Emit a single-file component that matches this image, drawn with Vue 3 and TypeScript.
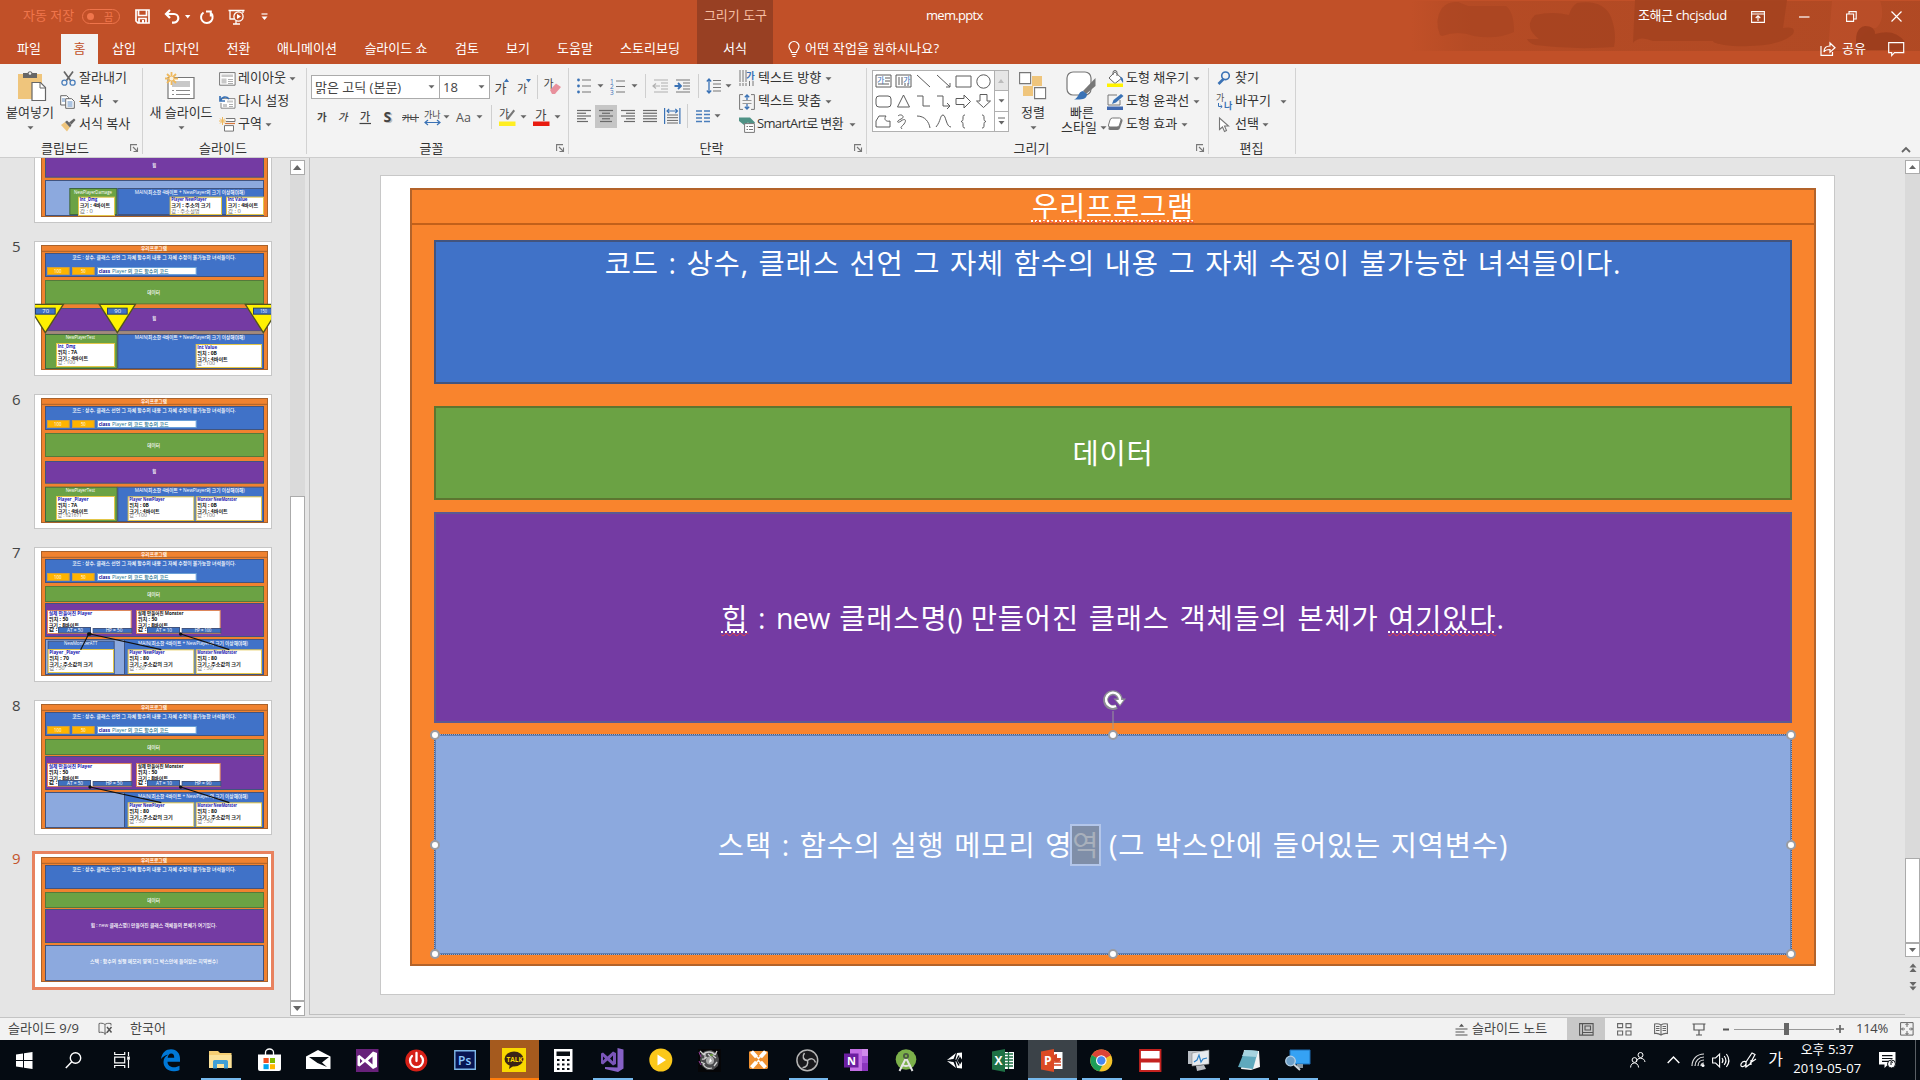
<script setup lang="ts">
import { h } from 'vue'

interface Item { x: number; i?: string; t?: string; c?: string }
interface Glyph { w: number; h: number; d: string }

const S = (w: number, hh: number, d: string): Glyph => ({ w, h: hh, d })
const lines = (ws: number[][], w = 15, color = '#6a6a6a') =>
  S(w, 14, ws.map(([a, b], n) => `<path d="M${a} ${1.5 + n * 2.75}H${b}" stroke="${color}" stroke-width="1.2"/>`).join(''))
const ga = (size: number, x: number, y: number, extra = '', t = '가') =>
  `<text x="${x}" y="${y}" font-size="${size}" fill="#444" ${extra}>${t}</text>`

const icons: Record<string, Glyph> = {
  car: S(7, 4, '<path d="M0.5 0.2h6L3.5 3.6z" fill="#666"/>'),
  carw: S(6, 4, '<path d="M0 0h5.4L2.7 3.4z" fill="#fff"/>'),
  sep: S(1, 24, '<path d="M0.5 0V24" stroke="#cfcfcf"/>'),
  save: S(15, 15, '<path d="M1 1h13v13H3L1 12z M3.5 1v5.5h8V1 M4 14v-4.500h7V14" fill="none" stroke="#fff" stroke-width="1.700"/><path d="M7 11h2v3H7z" fill="#fff"/>'),
  undo: S(17, 15, '<path d="M6 1L2 5l4 4M2.500 5H10a4.300 4.300 0 0 1 0 8.600H8" fill="none" stroke="#fff" stroke-width="2.200"/>'),
  redo: S(15, 16, '<path d="M4.500 3.500A5.800 5.800 0 1 0 11 3.400M11.800 7.500V2.500H7" fill="none" stroke="#fff" stroke-width="2"/>'),
  show: S(17, 16, '<path d="M0.500 1.500h16M2 2v8h4M8 12v3M5 15h7M15 2v2" fill="none" stroke="#fff" stroke-width="1.300"/><circle cx="10.500" cy="7.500" r="4.600" fill="none" stroke="#fff" stroke-width="1.300"/><path d="M9 5v5l4-2.500z" fill="#fff"/>'),
  custom: S(7, 8, '<path d="M0.500 1h6" stroke="#fff" stroke-width="1.200"/><path d="M0.500 3.500h6l-3 3.500z" fill="#fff"/>'),
  ribbonopt: S(14, 12, '<path d="M0.600 0.600h12.800v10.800H0.600zM0.600 3h12.800M7 10V5M4.700 7L7 4.800 9.300 7" fill="none" stroke="#fff" stroke-width="1.100"/>'),
  min: S(11, 2, '<path d="M0 1h10.500" stroke="#fff" stroke-width="1.200"/>'),
  restore: S(11, 11, '<path d="M0.600 3h7v7.400h-7zM3 3V0.600h7.200V8H7.600" fill="none" stroke="#fff" stroke-width="1.100"/>'),
  close: S(11, 11, '<path d="M0.500 0.500l10 10M10.500 0.500l-10 10" stroke="#fff" stroke-width="1.200"/>'),
  share: S(16, 14, '<path d="M1 4v9.300h11.500V10M4 10c0-4 2-6 6-6V1l5 4.700-5 4.500V7.500C7 7.500 5 8 4 10z" fill="none" stroke="#fff" stroke-width="1.200"/>'),
  comment: S(17, 15, '<path d="M0.700 0.700h15v10H6.500L3.700 13.600V10.700h-3z" fill="none" stroke="#fff" stroke-width="1.200"/>'),
  bulb: S(12, 17, '<path d="M3.500 11.500C3.500 9 1 8.500 1 5.500a5 5 0 0 1 10 0c0 3-2.500 3.500-2.500 6zM3.700 13.500h4.600M4.500 15.500h3" fill="none" stroke="#fff" stroke-width="1.200"/>'),
  paste: S(30, 32, '<path d="M1 4h24v25H1z" fill="#efc57c"/><path d="M6 3h4.500a2.700 2.700 0 0 1 5 0H20v5H6z" fill="#666"/><circle cx="13" cy="3.500" r="1.300" fill="#f3f3f3"/><path d="M15 12.500h8.500l5 5V30.500H15z" fill="#fff" stroke="#666" stroke-width="1.200"/><path d="M23 12.500v5.500h5.500" fill="none" stroke="#666"/>'),
  cut: S(15, 15, '<path d="M3 0.500l6.500 9M12 0.500l-6.500 9" stroke="#666" stroke-width="1.700"/><circle cx="3.400" cy="11.700" r="2.500" fill="none" stroke="#4a7ebb" stroke-width="1.300"/><circle cx="11.600" cy="11.700" r="2.500" fill="none" stroke="#4a7ebb" stroke-width="1.300"/>'),
  copy: S(15, 14, '<path d="M0.700 0.700h6l2 2V10H0.700z" fill="#fff" stroke="#666"/><path d="M5.700 3.700h6l2.600 2.600v7H5.700z" fill="#fff" stroke="#666"/><path d="M2 4h3M2 6h3M7.500 7h5M7.500 9h5M7.500 11h5" stroke="#4a7ebb" stroke-width="0.900"/>'),
  brush: S(16, 14, '<path d="M1 7l4-3 5 5-3 4.500z" fill="#efc57c"/><path d="M5 4l2-1.500L11.500 7 10 9.500z" fill="#666"/><path d="M9 4.500L14 0.500l1.500 1.500-4 4.500z" fill="#666"/>'),
  newslide: S(32, 28, '<path d="M3 5.500h26v21H3z" fill="#fff" stroke="#777" stroke-width="1.200"/><path d="M7 9h18v6H7z" fill="#c8c8c8"/><path d="M7 18.500h2m2 0h14M7 22.500h2m2 0h14" stroke="#888"/><path d="M6.500 0v13M0 6.500h13M2 2l9 9M11 2l-9 9" stroke="#efb95e" stroke-width="1.800"/><circle cx="6.500" cy="6.500" r="2" fill="#f8f0e0"/>'),
  layout: S(17, 14, '<path d="M0.600 0.600h15.500v12.600H0.600z" fill="#fff" stroke="#777"/><path d="M2.500 2.500h11.500v2.500H2.500zM2.500 6.500h5v5h-5z" fill="#c8c8c8"/><path d="M9 7.500h5M9 9.500h5M9 11.500h5" stroke="#999" stroke-width="0.800"/>'),
  reset: S(17, 14, '<path d="M4 3.600h12v9.600H2V8" fill="#fff" stroke="#888"/><path d="M8 5.500h6v2H8zM4 9h4v3H4z" fill="#c8c8c8"/><path d="M10 9.500h4M10 11.500h4" stroke="#999" stroke-width="0.800"/><path d="M1 1v5h5M1.500 5.500C3 2 7 0.500 10 4" fill="none" stroke="#3a72b5" stroke-width="1.700"/>'),
  section: S(17, 15, '<path d="M7 1.500h9M7 4.500h9v-3M5.500 8.600h9v5.500h-9z" fill="#fff" stroke="#777"/><path d="M6 6.500h10" stroke="#d9783c" stroke-width="1.200"/><path d="M3.500 0v8M0 4h7M1 1.500l5 5M6 1.500l-5 5" stroke="#efb95e" stroke-width="1"/>'),
  grow: S(15, 18, ga(13, -0.5, 15) + '<path d="M9 4l2.500-3.500L14 4z" fill="#3a72b5"/>'),
  shrink: S(15, 18, ga(11, 0, 15) + '<path d="M9 1h5l-2.500 3.500z" fill="#3a72b5"/>'),
  clear: S(18, 18, ga(11, -0.5, 10) + '<path d="M6 12l6-6.500 5 3.500-6 7h-3z" fill="#e8909c"/>'),
  b: S(12, 16, ga(10.5, 0, 12, 'font-weight="700"')),
  it: S(12, 16, `<g transform="translate(2.500 0) skewX(-12)">${ga(10.5, 0, 12, 'font-weight="500"')}</g>`),
  u: S(14, 18, ga(11, 1, 12.5, 'font-weight="500"') + '<path d="M0.500 15.500h11.500" stroke="#444" stroke-width="1.200"/>'),
  sh: S(13, 18, '<text x="2" y="15" font-size="14" font-weight="700" fill="#bbb">S</text><text x="0.500" y="14" font-size="14" font-weight="700" fill="#444">S</text>'),
  strike: S(17, 14, '<text x="0" y="10.500" font-size="8.500" font-weight="500" fill="#444">가나</text><path d="M0 7.500h17" stroke="#444"/>'),
  spacing: S(18, 18, '<text x="0" y="10" font-size="9" fill="#444">가나</text><path d="M1 14.500h15M4 12L1 14.500l3 2.500M13 12l3 2.500-3 2.500" fill="none" stroke="#3a72b5" stroke-width="1.200"/>'),
  aa: S(18, 16, '<text x="0" y="12.500" font-size="12.500" fill="#555">Aa</text>'),
  hl: S(17, 20, ga(11, 0, 11) + '<path d="M7 12L14.500 2.500l1.500 1.500L9 13z" fill="#777"/><path d="M0 14.500h16.500V19H0z" fill="#ffee22"/>'),
  fc: S(17, 20, ga(12.5, 2, 12.5) + '<path d="M0 14.500h16.500V19H0z" fill="#e81b10"/>'),
  bullets: S(15, 16, '<path d="M5 2h9M5 8h9M5 14h9" stroke="#777" stroke-width="1.100"/><circle cx="1.500" cy="2" r="1.400" fill="#3a72b5"/><circle cx="1.500" cy="8" r="1.400" fill="#3a72b5"/><circle cx="1.500" cy="14" r="1.400" fill="#3a72b5"/>'),
  nums: S(16, 17, '<path d="M6 3h9M6 8.500h9M6 14h9" stroke="#777" stroke-width="1.100"/><text x="0" y="5.500" font-size="6.500" fill="#3a72b5">1</text><text x="0" y="11" font-size="6.500" fill="#3a72b5">2</text><text x="0" y="16.500" font-size="6.500" fill="#3a72b5">3</text>'),
  outdent: S(17, 14, '<path d="M2 1h14M9 4h7M9 7h7M9 10h7M2 13h14M1 7h7M4 4.500L1 7l3 2.500" fill="none" stroke="#b0b0b0" stroke-width="1.200"/>'),
  indent: S(17, 14, '<path d="M2 1h14M9 4h7M9 7h7M9 10h7M2 13h14" stroke="#777" stroke-width="1.100"/><path d="M0.500 7H7M4 4l3 3-3 3" fill="none" stroke="#3a72b5" stroke-width="1.800"/>'),
  spacingv: S(16, 16, '<path d="M7 2.500h8M7 6h8M7 9.500h8M7 13h8" stroke="#777" stroke-width="1.100"/><path d="M3 1v14M0.800 3.500L3 1l2.200 2.500M0.800 12.500L3 15l2.200-2.500" fill="none" stroke="#3a72b5" stroke-width="1.300"/>'),
  al: lines([[0, 14], [0, 9], [0, 14], [0, 9], [0, 11]]),
  ac: lines([[0, 14], [3, 11], [0, 14], [3, 11], [1, 13]]),
  ar: lines([[0, 14], [5, 14], [0, 14], [5, 14], [3, 14]]),
  aj: lines([[0, 14], [0, 14], [0, 14], [0, 14], [0, 14]]),
  ad: S(17, 17, '<path d="M0.600 0v16M15.900 0v16M3 3h10.500M5.200 0.800L3 3l2.200 2.200M11.300 0.800L13.500 3l-2.200 2.200" fill="none" stroke="#3a72b5" stroke-width="1.200"/><path d="M3 7h11M3 9.700h11M3 12.400h11M3 15h11" stroke="#666"/>'),
  cols: S(14, 13, '<path d="M0 1h6M8 1h6M0 4.500h6M8 4.500h6M0 8h6M8 8h6M0 11.500h6M8 11.500h6" stroke="#4a7ebb" stroke-width="1.300"/>'),
  tdir: S(17, 17, '<path d="M1 0v12M4 0v12M7 0v12M1 13v3M4 13v3M7 13v3M10.500 11v5M14 11v5" stroke="#777"/><text x="7" y="9" font-size="9.500" fill="#3a72b5" font-weight="700">가</text>'),
  talign: S(17, 16, '<path d="M4 0.600H0.600v14.800H4M12 0.600h3.400v14.800H12" fill="none" stroke="#777"/><path d="M3.500 6.500h9M3.500 9.500h9" stroke="#999"/><path d="M8 1v5M5.800 3.200L8 1l2.200 2.200M8 15v-5M5.800 12.800L8 15l2.200-2.200" fill="none" stroke="#3a72b5" stroke-width="1.300"/>'),
  smart: S(17, 16, '<path d="M0 0.500h11l5 5-3 3L9 5.500 5 8 0 4z" fill="#4f9285"/><path d="M5.600 6.600h9.800v8.800H5.600z" fill="#fff" stroke="#777"/><path d="M7.500 9.500h1.500M10 9.500h4M7.500 12.500h1.500M10 12.500h4" stroke="#777"/>'),
  arrange: S(28, 28, '<path d="M13 4h10v10H13zM4 14h10v10H4z" fill="#efc57c"/><path d="M0.600 0.600h11v11H0.600zM15.600 15.600h11v11H15.600z" fill="#fff" stroke="#777" stroke-width="1.100"/>'),
  quick: S(31, 30, '<path d="M7 1h12a6 6 0 0 1 6 6v11a6 6 0 0 1-6 6H7a6 6 0 0 1-6-6V7a6 6 0 0 1 6-6z" fill="#fff" stroke="#777" stroke-width="1.200"/><path d="M29.500 7v8L20 23l-3-3z" fill="#777"/><path d="M17 20l4 3c0 5-5 6-13 5.500 5-1.500 4-8 9-8.500z" fill="#3a72b5"/>'),
  fill: S(17, 16, '<path d="M8 0.800l6.500 6.500L8 12.500 2 7z" fill="#fff" stroke="#666"/><path d="M6 4V1.500a2 2 0 0 1 4 0V5" fill="none" stroke="#666"/><path d="M13 5.500c3 1 3.500 3 3 6.500l-2-3z" fill="#3a72b5"/><path d="M0 12.500h16V16H0z" fill="#fff200"/>'),
  outline: S(17, 16, '<path d="M10 1H1v10h12V6" fill="none" stroke="#777"/><path d="M5 10l1.500-4L14 0l2.500 2L9 8.500z" fill="#3a72b5"/><path d="M0 12.500h16V16H0z" fill="#4169b0"/>'),
  effect: S(17, 15, '<path d="M5 2h9q2 0 1.500 2L13 11q-.5 2-2.500 2H3Q1 13 1.500 11z" fill="#777"/><path d="M5.500 1h7q2 0 1.500 2L12.500 8q-.5 2-2.500 2H3Q1 10 1.500 8L3 3q.5-2 2.500-2z" fill="#fff" stroke="#777"/>'),
  find: S(14, 15, '<circle cx="8.500" cy="4.800" r="3.800" fill="none" stroke="#3a72b5" stroke-width="1.600"/><path d="M6.500 8L1.500 13" stroke="#3a72b5" stroke-width="2.600"/>'),
  replace: S(18, 17, '<text x="0" y="8" font-size="9" fill="#555">가</text><text x="8" y="15.500" font-size="9" font-weight="700" fill="#3a72b5">나</text><path d="M2.500 10v3.500H6M4.500 12l1.700 1.600-1.700 1.600" fill="none" stroke="#3a72b5"/>'),
  select: S(11, 16, '<path d="M1.500 1v11.500l3-2.500 2 4.500 2-1L6.500 9h4z" fill="#fff" stroke="#777" stroke-width="1.100"/>'),
  launch: S(9, 8, '<path d="M0.600 7V0.600H7M3 3l4 4M7.500 3.500v4h-4" fill="none" stroke="#777" stroke-width="1.100"/>'),
  spell: S(15, 14, '<path d="M7 2.500C5 1 3 1 1 1.500v9c2-.5 4-.5 6 1 1-.7 1.500-1 2.500-1M7 2.500V13M7 2.500C8 1.500 10 1 13 1.500v2" fill="none" stroke="#666"/><path d="M9 5l4.500 5.500M13.500 5L9 10.500" stroke="#555" stroke-width="1.500"/>'),
  notes: S(13, 13, '<path d="M0.500 6h12M0.500 9h9M0.500 12h12" stroke="#555" stroke-width="1.100"/><path d="M4 3.800h5L6.500 0.800z" fill="#555"/>'),
  vnormal: S(15, 13, '<path d="M0.600 0.600h13.500v11.500H0.600zM3.500 0.600v11.500M6 3h5.500v4H6zM3.500 9.500h10" fill="none" stroke="#555" stroke-width="1.100"/>'),
  vsort: S(15, 13, '<path d="M0.600 0.600h5v4h-5zM9 0.600h5v4H9zM0.600 8h5v4h-5zM9 8h5v4H9z" fill="none" stroke="#666" stroke-width="1.100"/>'),
  vread: S(14, 13, '<path d="M7 2C5 .6 3 .6 .6 1v9.500C3 10 5 10.500 7 12c2-1.500 4-2 6.400-1.500V1C11 .6 9 .6 7 2zV12" fill="none" stroke="#666" stroke-width="1.100"/><path d="M2 3.500h3.500M2 5.500h3.500M2 7.500h3.500M8.500 3.500H12M8.500 5.500H12M8.500 7.500H12" stroke="#666"/>'),
  vshow: S(14, 13, '<path d="M0.500 1h13M2 1v6h10V1M7 7v5M4 12h6" fill="none" stroke="#555" stroke-width="1.200"/>'),
  minus: S(7, 3, '<path d="M0 1.500h6" stroke="#555" stroke-width="2"/>'),
  plus: S(8, 8, '<path d="M0 4h8M4 0v8" stroke="#666" stroke-width="1.700"/>'),
  slider: S(101, 12, '<path d="M0 6.500h100" stroke="#999"/><path d="M50 0h5v12h-5z" fill="#666"/>'),
  fit: S(14, 14, '<path d="M0.600 0.600h12.500v12.500H0.600z" fill="none" stroke="#666"/><path d="M7 1.500v3.500M7 9v3.500M1.500 7H5M9 7h3.500M5.500 3L7 1.500 8.500 3M5.500 11L7 12.500 8.500 11M3 5.500L1.500 7 3 8.500M11 5.500L12.500 7 11 8.500" stroke="#666" fill="none"/>'),
  win: S(17, 17, '<path d="M0 2.500l7-1v6.500H0zM8 1.300L16.500 0v8H8zM0 9h7v6.500l-7-1zM8 9h8.500v8L8 15.700z" fill="#fff"/>'),
  search: S(17, 17, '<circle cx="10.500" cy="6" r="5.200" fill="none" stroke="#fff" stroke-width="1.400"/><path d="M6.800 9.800L0.800 16" stroke="#fff" stroke-width="1.500"/>'),
  task: S(17, 16, '<path d="M0.700 0v2.500h10V0M0.700 5.200h10v5.600h-10zM0.700 16v-2.500h10V16M14.500 0v4M14.500 8v8" fill="none" stroke="#fff" stroke-width="1.200"/><path d="M13.200 4.500h2.600v3.300h-2.600z" fill="#fff"/>'),
  edge: S(20, 22, '<path d="M0 10C1 3.500 5 .3 10 .3c6 0 9 4.500 9 9.700v2.700H6.500c0 4 3.500 5.500 6.500 5.500 2 0 4-.6 5.500-1.500v4.200c-2 1-4 1.300-6.200 1.300C7 22.200 2.500 18.500 2.500 13c0-3.500 2-6 4.500-7.200C5 6 2 7.300 0 10zM6.700 8.800h6.500c0-3-1-4.300-3-4.300-2 0-3.200 1.700-3.500 4.300z" fill="#0078d7"/>'),
  folder: S(23, 20, '<path d="M0 1h9l2 2h11.500v15H0z" fill="#f5ce73"/><path d="M0 5h22.500v13H0z" fill="#fbe29a"/><path d="M4 18.500v-7a1.500 1.500 0 0 1 1.500-1.500h12A1.500 1.500 0 0 1 19 11.500v7h-4V14H8v4.500z" fill="#3f9fd6"/>'),
  store: S(23, 23, '<path d="M7.500 6V3.500a4 3.500 0 0 1 8 0V6" fill="none" stroke="#fff" stroke-width="1.300"/><path d="M0 5.500h23V20a2 2 0 0 1-2 2H2a2 2 0 0 1-2-2z" fill="#fff"/><path d="M5.500 9h5.200v5H5.500z" fill="#f25022"/><path d="M12 9h5v5h-5z" fill="#7fba00"/><path d="M5.500 15.200h5.200v5H5.500z" fill="#00a4ef"/><path d="M12 15.200h5v5h-5z" fill="#ffb900"/>'),
  mail: S(25, 20, '<path d="M0 6.500L12 0l12.500 6.500V19H0z" fill="#fff"/><path d="M3 7h20l-7 5.500 5 4.500-9.500-4z" fill="#080e14"/>'),
  vs: S(23, 23, '<path d="M0 0h22.500v23H0z" fill="#68217a"/><path d="M17 2.500l4 1.500v14l-4 2L9 13l-5.500 4.500L1.500 16.500V7L3.500 6 9 10.500zM16.500 7.500L12 11.500l4.500 4zM4 9.500v5l2.500-2.500z" fill="#fff" fill-rule="evenodd"/>'),
  power: S(23, 23, '<circle cx="11.300" cy="11.500" r="11" fill="#d62017"/><path d="M7 7a6.500 6.500 0 1 0 9 0M11.500 4v8" fill="none" stroke="#fff" stroke-width="2.300" stroke-linecap="round"/>'),
  ps: S(23, 20, '<path d="M0.800 0.800h20.500v18.500H0.800z" fill="#071552" stroke="#7fb8e8" stroke-width="1.400"/><text x="4" y="14.500" font-size="12" font-weight="600" fill="#8ecbff">Ps</text>'),
  kakao: S(25, 24, '<path d="M0 0h24v24H0z" fill="#f9d800"/><ellipse cx="12" cy="11" rx="9.500" ry="7.500" fill="#3a2317"/><path d="M8 16l-1 5 5-3.500z" fill="#3a2317"/><text x="4.500" y="13.500" font-size="6.500" font-weight="700" fill="#f9d800">TALK</text>'),
  calc: S(19, 23, '<path d="M0 0h18.500v23H0z" fill="#fff"/><path d="M2.500 2.500h13.500v4.500H2.500zM3 10h2.500v2H3zM8 10h2.500v2H8zM13 10h2.500v2H13zM3 14.500h2.500v2H3zM8 14.500h2.500v2H8zM13 14.500h2.500v2H13zM3 19h2.500v2H3zM8 19h2.500v2H8zM13 19h2.500v2H13z" fill="#0a0f14"/>'),
  vs2: S(25, 24, '<path d="M17.500 0l6 1.500v19L18 24 5 21v-2l12.500.500z" fill="#8661c5"/><path d="M1 5.500l2-1 4.500 4 5.500-5 3 1.500v11l-3 1.500-5.500-5-4.500 4-2-1zM13 7.500L10 10.500l3 3zM3 8.500v4l2-2z" fill="#7a55b8" fill-rule="evenodd"/>'),
  play: S(24, 24, '<circle cx="11.800" cy="12" r="11.500" fill="#fbc81a"/><path d="M8.500 6.500v11l8.500-5.500z" fill="#fff"/>'),
  eye: S(24, 23, '<path d="M0 0h23v23H0z" fill="#060608"/><path d="M3 5l4-3 6-1 6 3 2 6-1 7-5 4-6 0-5-4-2-6z" fill="#4a4a4c"/><path d="M2 2l4 4M19 2l-2 4M5 6c3-4 9-4 12 0M4 10c2 1 3-1 5-2M14 6l4 3M5 15c2 4 6 5 9 4M10 5l4 4M16 17l3-4M7 4v5M3 13l4 2" fill="none" stroke="#d0d0d0" stroke-width="1.300"/><circle cx="12" cy="11.500" r="4" fill="#a8a8a8"/><path d="M12 9l2 3-3 2z" fill="#fff"/><path d="M1 3l2 5M1 12l2 4" stroke="#9a3ea0"/><path d="M12 6h3" stroke="#6ca63a" stroke-width="1.500"/>'),
  xsplit: S(22, 22, '<path d="M2 2h17l1 1v16l-1 1H2l-1-1V3z" fill="#ee9030"/><path d="M3.500 2.500l5 5.500M17.500 2.500l-5 5.500M3.500 18.500l5-5.500M17.500 18.500l-5-5.500" stroke="#fff" stroke-width="4"/><path d="M7 6l3.500 3.500L14 6M7 15l3.500-3.500L14 15" fill="none" stroke="#fff" stroke-width="1.500"/>'),
  obs: S(23, 23, '<circle cx="11.300" cy="11.300" r="10.400" fill="#19191c" stroke="#b4b4b4" stroke-width="1.500"/><path d="M11.500 11.500c-4.500-.5-5.500-4-3-7.500M11.500 11.500c3-3 7-2 8 2M11.500 11.500c1 4-1 7-5 7.200" fill="none" stroke="#b9b9b9" stroke-width="1.500"/>'),
  onenote: S(25, 23, '<path d="M6 0h18v22H6z" fill="#c36fe4"/><path d="M18 0h6v7h-6z" fill="#d08bea"/><path d="M18 7h6v7h-6z" fill="#a24fd2"/><path d="M18 14h6v8h-6z" fill="#8b35bd"/><path d="M0 4.500h14.500v14H0z" fill="#6c1fa0"/><text x="3" y="15.500" font-size="11" font-weight="700" fill="#fff">N</text>'),
  android: S(22, 23, '<circle cx="11" cy="10.500" r="10.300" fill="#7cb04a"/><path d="M11 9L4.500 22M11 9l6.500 13M6.500 15.500c3 2 6 2 9 0" fill="none" stroke="#e4e4e4" stroke-width="2"/><circle cx="11" cy="7" r="3" fill="#4b5a42"/><circle cx="11" cy="7" r="1.200" fill="#7cb04a"/>'),
  unity: S(16, 17, '<path d="M0 8L9 1 6.500 7zM0 9L9 16 6.500 10z" fill="#fff"/><path d="M10 1l5 -0.500V7.500L13 4.500 10.500 8.500 13 12.500 15 9.500V16.500L10 16 8.500 9.500V7.500z" fill="#fff"/><path d="M4 8.500h5.500M9.500 8.500L12 3.500M9.500 8.500L12 13.500" stroke="#050b12" stroke-width="1.400"/>'),
  excel: S(23, 23, '<path d="M11 3h11v17H11z" fill="#fff"/><path d="M12 5h9M12 8h9M12 11h9M12 14h9M12 17h9M16.500 3v17" stroke="#1e7145" stroke-width="1.300"/><path d="M0 2.500L13 0v23L0 20.500z" fill="#1e7145"/><text x="2.500" y="16" font-size="12" font-weight="700" fill="#fff">X</text>'),
  ppt: S(23, 23, '<path d="M11 3h10.500v17H11z" fill="#fff"/><path d="M13 13h7M13 16h7" stroke="#d24726" stroke-width="1.300"/><path d="M16 5v4h4a4 4 0 1 1-4-4z" fill="#d24726"/><path d="M0 2.500L13 0v23L0 20.500z" fill="#dc4a24"/><text x="3" y="16" font-size="12" font-weight="700" fill="#fff">P</text>'),
  chrome: S(23, 23, '<circle cx="11.300" cy="11.500" r="11" fill="#f3c32b"/><path d="M11.300 11.500L1.800 6A11 11 0 0 1 20.800 6z" fill="#dc4437"/><path d="M20.800 6H11.300v5.500z" fill="#dc4437"/><path d="M1.800 6l9.500 5.500 1 5-3 5.800A11 11 0 0 1 1.800 6z" fill="#1d9d58"/><circle cx="11.300" cy="11.500" r="5.300" fill="#fff"/><circle cx="11.300" cy="11.500" r="4.200" fill="#4688f1"/>'),
  red: S(23, 23, '<path d="M1 1h20.500v9.500H1zM1 12.500h20.500V22H1z" fill="#fff" stroke="#c5221f" stroke-width="1.800"/>'),
  perf: S(23, 22, '<path d="M0 2h17v13H0z" fill="#b9bec4"/><path d="M4 4l17-3v14L4 17z" fill="#e6eaee" stroke="#888" stroke-width=".6"/><path d="M6 13l3-2 2-5 2 7 2-3 4-1" fill="none" stroke="#2a80c8" stroke-width="1.200"/><path d="M8 17l8-1 2 4-9 2z" fill="#b9bec4"/>'),
  notepad: S(24, 23, '<path d="M7 1l15 1 1 16-9 3-10-1z" fill="#f3f3f3"/><path d="M8 1l13 1-5 18L1 18z" fill="#5fa9bd"/><path d="M8 1l13 1-1.500 6L5 7z" fill="#a6d3df"/>'),
  rdp: S(26, 23, '<path d="M5 1h20v14H5z" fill="#35a2f4" stroke="#1f6fb5"/><path d="M12 15h6v4h-6z" fill="#8494a0"/><circle cx="5.500" cy="12" r="4.800" fill="#6d9fc8" stroke="#b5cfe4" stroke-width="1.300"/><path d="M9 15.500l6 5.500" stroke="#cfd8df" stroke-width="2"/>'),
  people: S(16, 16, '<circle cx="10.500" cy="3" r="2.500" fill="none" stroke="#fff"/><path d="M6.500 10c0-5 8-5 8.500 0" fill="none" stroke="#fff"/><circle cx="4.500" cy="8" r="2.400" fill="none" stroke="#fff"/><path d="M0.600 15.500c0-6 7.500-6 8 0" fill="none" stroke="#fff"/>'),
  up: S(13, 8, '<path d="M0.700 7L6.500 1l5.800 6" fill="none" stroke="#fff" stroke-width="1.400"/>'),
  wifi: S(14, 14, '<path d="M1 13C1 6 6 1 13 1M4 13c0-5 4-9 9-9M7 13c0-3.500 2.500-6 6-6M10 13c0-2 1-3 3-3" fill="none" stroke="#ddd" stroke-width="1.200"/><circle cx="12" cy="12.500" r="1.500" fill="#fff"/>'),
  vol: S(18, 15, '<path d="M0.600 5h3l4-4v13l-4-4h-3z" fill="none" stroke="#fff" stroke-width="1.100"/><path d="M10 5q2 2.500 0 5M12.200 3q3.500 4.500 0 9M14.400 1q5 6.500 0 13" fill="none" stroke="#fff" stroke-width="1.100"/>'),
  pen: S(17, 17, '<path d="M6 10L12 1l3 1.500-5 9.500-4 3zM1 12c2-4 6-3 5 0s-6 4-5 0zM10 11l6-4M11 8v5" fill="none" stroke="#fff" stroke-width="1.200"/>'),
  action: S(18, 17, '<path d="M0 0h16.500v12.500H9L5.500 16v-3.500H0z" fill="#fff"/><path d="M3 3.700h10.500M3 6.500h10.500M3 9.300h7" stroke="#0a0f14" stroke-width="1.200"/><circle cx="12.500" cy="12" r="4" fill="#fff" stroke="#0a0f14"/><path d="M12 13V9.500l2 1" fill="none" stroke="#0a0f14"/>'),
}

const Icon = (p: { n: string }) => {
  const g = icons[p.n]
  return h('svg', { class: 'icon', width: g.w, height: g.h, viewBox: `0 0 ${g.w} ${g.h}`, innerHTML: g.d })
}

// A row whose cells start at the given stops; the last cell takes what is left.
const Strip = (p: { items: Item[]; from: number }) => {
  const xs = p.items.map((i) => i.x)
  const cols = xs.map((x, n) => (n < xs.length - 1 ? `${xs[n + 1] - x}px` : '1fr')).join(' ')
  return h('div', { class: 'strip', style: { paddingLeft: `${xs[0] - p.from}px`, gridTemplateColumns: cols } },
    p.items.map((i) => h('span', { class: ['cell', i.t ? 'txt' : '', i.c] }, i.i ? h(Icon, { n: i.i }) : i.t)))
}

const ic = (x: number, i: string, c?: string): Item => ({ x, i, c })
const tx = (x: number, t: string, c?: string): Item => ({ x, t, c })

const quick = [tx(23, '자동 저장', 'dim'), tx(82, '끔', 'toggle'), ic(135, 'save'), ic(164, 'undo'), ic(185, 'carw'), ic(199, 'redo'), ic(228, 'show'), ic(261, 'custom')]
const windowBar = [tx(926, 'mem.pptx', 'narrow'), tx(1638, '조해근 chcjsdud', 'name'), ic(1751, 'ribbonopt'), ic(1799, 'min'), ic(1846, 'restore'), ic(1891, 'close')]
const tabs = [
  { t: '파일', w: 58 }, { t: '홈', w: 37, on: true }, { t: '삽입', w: 52 }, { t: '디자인', w: 63 }, { t: '전환', w: 51 },
  { t: '애니메이션', w: 86 }, { t: '슬라이드 쇼', w: 92 }, { t: '검토', w: 50 }, { t: '보기', w: 52 }, { t: '도움말', w: 62 }, { t: '스토리보딩', w: 88 },
]
const tell = [ic(788, 'bulb'), tx(805, '어떤 작업을 원하시나요?', 'wide'), ic(1820, 'share'), tx(1842, '공유'), ic(1888, 'comment')]

const clip = [
  [ic(61, 'cut'), tx(79, '잘라내기')],
  [ic(60, 'copy'), tx(79, '복사'), ic(112, 'car')],
  [ic(60, 'brush'), tx(79, '서식 복사')],
]
const slides = [
  [ic(219, 'layout'), tx(238, '레이아웃'), ic(289, 'car')],
  [ic(219, 'reset'), tx(238, '다시 설정')],
  [ic(219, 'section'), tx(238, '구역'), ic(265, 'car')],
]
const font1 = [ic(495, 'grow'), ic(517, 'shrink'), ic(537, 'sep'), ic(544, 'clear')]
const font2 = [ic(317, 'b'), ic(338, 'it'), ic(359, 'u'), ic(383, 'sh'), ic(402, 'strike'), ic(424, 'spacing'), ic(443, 'car'), ic(456, 'aa'), ic(476, 'car'), ic(491, 'sep'), ic(499, 'hl'), ic(520, 'car'), ic(533, 'fc'), ic(554, 'car')]
const para1 = [ic(577, 'bullets'), ic(597, 'car'), ic(610, 'nums'), ic(631, 'car'), ic(645, 'sep'), ic(652, 'outdent'), ic(674, 'indent'), ic(698, 'sep'), ic(706, 'spacingv'), ic(725, 'car')]
const para2 = [ic(577, 'al'), ic(595, 'ac', 'pressed'), ic(621, 'ar'), ic(643, 'aj'), ic(664, 'ad'), ic(687, 'sep'), ic(696, 'cols'), ic(714, 'car')]
const text3 = [
  [ic(739, 'tdir'), tx(758, '텍스트 방향'), ic(825, 'car')],
  [ic(739, 'talign'), tx(758, '텍스트 맞춤'), ic(825, 'car')],
  [ic(739, 'smart'), tx(757, 'SmartArt로 변환', 'tight'), ic(849, 'car')],
]
const shapeStyle = [
  [ic(1107, 'fill'), tx(1126, '도형 채우기'), ic(1193, 'car')],
  [ic(1107, 'outline'), tx(1126, '도형 윤곽선'), ic(1193, 'car')],
  [ic(1107, 'effect'), tx(1126, '도형 효과'), ic(1181, 'car')],
]
const edit = [
  [ic(1217, 'find'), tx(1235, '찾기')],
  [ic(1216, 'replace'), tx(1235, '바꾸기'), ic(1280, 'car')],
  [ic(1218, 'select'), tx(1235, '선택'), ic(1262, 'car')],
]
const gallery = [
  '<path d="M1 2h15v12H1z"/><path d="M10 5h5M10 8h5M3 11h11"/><text x="2" y="9.500" font-size="8" fill="#3a72b5" stroke="none">가</text>',
  '<path d="M1 2h15v12H1z"/><path d="M4 4v8M7 4v8M10 10v3M13 10v3"/><text x="8" y="9.500" font-size="8" fill="#3a72b5" stroke="none">가</text>',
  '<path d="M2 2l13 12"/>', '<path d="M2 2l13 12M15 10v4h-4"/>', '<path d="M1 3h15v11H1z"/>', '<circle cx="8.500" cy="8.500" r="6.700"/>',
  '<rect x="1" y="3" width="15" height="11" rx="3"/>', '<path d="M8.500 2l6 12h-12z"/>', '<path d="M2 3h6v10h7"/>', '<path d="M2 3h6v10h7M12 10l3 3-3 3"/>', '<path d="M1 5.500h8V2l6.500 6.500L9 15v-3.500H1z"/>', '<path d="M5 1.500h7V8h3.500l-7 6.500L1.500 8H5z"/>',
  '<path d="M4 3h7c-3 4 1 6 4 5v6H1V8z"/>', '<path d="M3 3c3-3 8 1 3 3s-4 5 0 2 6-1 3 3-4 2-2 5"/>', '<path d="M2 3c8 0 12 6 13 12"/>', '<path d="M1 14C6 8 5 2 8 2s3 12 8 12"/>', '<path d="M10 2c-2 0-2 1-2 3s0 3-2 3.500c2 .5 2 1.500 2 3.500s0 3 2 3"/>', '<path d="M7 2c2 0 2 1 2 3s0 3 2 3.500c-2 .5-2 1.500-2 3.500s0 3-2 3"/>',
]

const status = [tx(8, '슬라이드 9/9'), ic(98, 'spell'), tx(130, '한국어'), ic(1455, 'notes'), tx(1472, '슬라이드 노트'), ic(1567, 'vnormal', 'view'), ic(1617, 'vsort'), ic(1654, 'vread'), ic(1692, 'vshow'), ic(1723, 'minus'), ic(1734, 'slider'), ic(1836, 'plus'), tx(1856, '114%', 'pct'), ic(1900, 'fit')]

const apps = [
  { n: 'win' }, { n: 'search' }, { n: 'task' }, { n: 'edge' }, { n: 'folder', c: 'run' }, { n: 'store' }, { n: 'mail' }, { n: 'vs' }, { n: 'power' }, { n: 'ps' },
  { n: 'kakao', c: 'alert' }, { n: 'calc' }, { n: 'vs2', c: 'run' }, { n: 'play' }, { n: 'eye' }, { n: 'xsplit' }, { n: 'obs', c: 'run' }, { n: 'onenote' },
  { n: 'android' }, { n: 'unity' }, { n: 'excel' }, { n: 'ppt', c: 'active' }, { n: 'chrome', c: 'run' }, { n: 'red' }, { n: 'perf', c: 'run' }, { n: 'notepad', c: 'run' }, { n: 'rdp', c: 'run' },
]
const tray = [ic(1630, 'people'), ic(1667, 'up'), ic(1691, 'wifi'), ic(1712, 'vol'), ic(1740, 'pen'), tx(1768, '가', 'ime')]

// Thumbnails are drawn on a 714 x 405 grid.
const BLUE = '#4072c8', GREEN = '#6ba244', PURPLE = '#743ba3', LIGHT = '#8ca9de'
const R = (x: number, y: number, x2: number, y2: number, f: string, s = '#41547f', w = 3) =>
  `<rect x="${x + w / 2}" y="${y + w / 2}" width="${x2 - x - w}" height="${y2 - y - w}" fill="${f}" stroke="${s}" stroke-width="${w}"/>`
const T = (x: number, y: number, len: number, t: string, f = '#fff', size = 15, weight = 500) =>
  `<text x="${x}" y="${y}" textLength="${len}" lengthAdjust="spacingAndGlyphs" font-size="${size}" font-weight="${weight}" fill="${f}">${t}</text>`
const L = (a: number, b: number, c: number, d: number) =>
  `<path d="M${a} ${b}L${c} ${d}" stroke="#111" stroke-width="3.500"/><circle cx="${a}" cy="${b}" r="5" fill="#111"/>`
const frame = R(21, 12, 702, 387, '#f0822f', '#a9622b')
const base = frame + '<path d="M21 31H702" stroke="#a9622b" stroke-width="3"/>' + T(321, 26, 78, '우리프로그램')
  + R(33, 36, 690, 108, BLUE) + T(115, 53, 490, '코드 : 상수, 클래스 선언 그 자체 함수의 내용 그 자체 수정이 불가능한 녀석들이다.')
const chips = R(39, 78, 107, 102, '#ffb400', '#d2a03c') + R(114, 78, 182, 102, '#ffb400', '#d2a03c') + T(60, 95, 22, '100') + T(141, 95, 14, '50')
  + R(189, 78, 488, 102, '#fff', '#6aa0d8') + T(194, 95, 34, 'class', '#11119a', 15, 700) + T(234, 95, 170, 'Player 의 코드 함수의 코드', '#27738f')
const data = (y2: number) => R(33, 117, 690, y2, GREEN, '#557a3a') + T(340, (117 + y2) / 2 + 5, 38, '데이터')
const span = (t: string) => [...t].reduce((w, c) => w + (c > '\u3000' ? 13 : 6.6), 0)
const note = (x: number, y: number, x2: number, y2: number, rows: string[], st = '#e3c648', head = '#1616b0') =>
  R(x, y, x2, y2, '#fff', st) + rows.map((t, n) => T(x + 5, y + 14 + n * 18 - (n === 3 ? 5 : 0), span(t), t, n === 0 ? head : t.startsWith('값 : ') ? '#666' : '#111', 14, t.startsWith('값 : ') ? 400 : 700)).join('')
const main = (y: number, x: number) => T(x, y, 330, 'MAIN(최소한 4바이트 + NewPlayer의 크기 이상해야해)')
const obj = (x: number, y: number, t: string, a: string, b: string, c: string) =>
  note(x, y, x + 254, y + 72, [t, '위치 : 50', '크기 : 8바이트', '값 :'], '#dd875c', c)
  + R(x + 33, y + 51, x + 132, y + 70, '#3e70be') + T(x + 60, y + 65, 48, a) + R(x + 137, y + 54, x + 256, y + 70, '#3e70be') + T(x + 176, y + 66, 50, b)
const tri = (x: number, n: string) => `<path d="M${x - 54} 190h108l-54 85z" fill="#fff100" stroke="#53551c" stroke-width="4"/>` + R(x - 31, 200, x + 31, 221, BLUE, '#25416e') + T(x - 9, 216, 20, n)
const ptr = ['위치 : 80', '크기 : 주소값의 크기', '값 : 50']
const pair = (a: string[], b: string[]) => note(281, 307, 481, 381, a) + note(485, 307, 684, 381, b)

const thumbs = [
  { n: 4, d: frame + R(33, 201, 690, 269, PURPLE) + T(355, 237, 12, '힙') + R(33, 276, 690, 384, LIGHT) + R(106, 300, 250, 381, GREEN, '#3f6640') + R(250, 300, 690, 381, BLUE)
    + T(120, 318, 114, 'NewPlayerDamage') + main(318, 302) + note(132, 326, 243, 384, ['Int _Dmg', '크기 : 4바이트', '값 : 0']) + note(407, 326, 564, 381, ['Player NewPlayer', '크기 : 주소의 크기', '값 : 주소설명']) + note(576, 326, 690, 381, ['Int Value', '크기 : 4바이트', '값 : 0']) },
  { n: 5, d: base + chips + data(190) + R(33, 201, 690, 271, PURPLE) + T(355, 238, 12, '힙') + R(33, 270, 690, 280, '#a08a80', '#9a8478') + R(33, 279, 251, 384, GREEN, '#3f6640') + R(250, 279, 690, 384, BLUE)
    + T(95, 295, 88, 'NewPlayerTest') + main(295, 302) + note(66, 306, 243, 378, ['Int _Dmg', '위치 : 7A', '크기 : 4바이트', '값 : 100']) + note(485, 309, 684, 381, ['Int Value', '위치 : 0B', '크기 : 4바이트', '값 : 100'])
    + tri(34, '70') + tri(250, '90') + tri(688, '150') },
  { n: 6, d: base + chips + data(189) + R(33, 201, 690, 269, PURPLE) + T(355, 237, 12, '힙') + R(33, 278, 251, 384, GREEN, '#3f6640') + R(250, 278, 690, 384, BLUE)
    + T(95, 295, 88, 'NewPlayerTest') + main(295, 302) + note(66, 306, 243, 378, ['Player _Player', '위치 : 7A', '크기 : 4바이트', '값 : 621671']) + pair(['Player NewPlayer', '위치 : 0B', '크기 : 4바이트', '값 : 100'], ['Monster NewMonster', '위치 : 0B', '크기 : 4바이트', '값 : 100']) },
  { n: 7, d: base + chips + data(165) + R(33, 168, 690, 270, PURPLE) + obj(39, 189, '실제 만들어진 Player', 'AT = 50', 'HP = 50', '#1616b0') + obj(306, 189, '실제 만들어진 Monster', 'AT = 10', 'HP = 100', '#111')
    + R(33, 276, 690, 384, LIGHT) + R(41, 281, 242, 384, BLUE) + R(270, 276, 690, 384, BLUE) + T(90, 295, 100, 'NewMonsterATT') + main(295, 312) + note(41, 306, 240, 378, ['Player _Player', '위치 : 70', ...ptr.slice(1)]) + pair(['Player NewPlayer', ...ptr], ['Monster NewMonster', ...ptr]) + L(164, 261, 140, 308) + L(168, 261, 382, 308) + L(440, 261, 586, 308) },
  { n: 8, d: base + chips + data(165) + R(33, 168, 690, 270, PURPLE) + obj(39, 189, '실제 만들어진 Player', 'AT = 50', 'HP = 50', '#1616b0') + obj(306, 189, '실제 만들어진 Monster', 'AT = 10', 'HP = 90', '#111')
    + R(33, 276, 690, 384, LIGHT) + R(270, 276, 690, 384, BLUE) + main(295, 312) + pair(['Player NewPlayer', ...ptr], ['Monster NewMonster', ...ptr]) + L(168, 261, 382, 308) + L(440, 261, 586, 308) },
  { n: 9, on: true, d: base + data(165) + R(33, 168, 690, 270, PURPLE) + T(170, 223, 378, '힙 : new 클래스명() 만들어진 클래스 객체들의 본체가 여기있다.') + R(33, 276, 690, 384, LIGHT) + T(168, 331, 383, '스택 : 함수의 실행 메모리 영역 (그 박스안에 들어있는 지역변수)') },
]

const handles = ['tl', 'tc', 'tr', 'ml', 'mr', 'bl', 'bc', 'br']
</script>

<template>
  <div class="app">
    <header class="top">
      <svg class="art" width="510" height="52" viewBox="1410 0 510 52">
        <defs><linearGradient id="haze"><stop offset="0" stop-color="#ab4722" stop-opacity="0" /><stop offset=".12" stop-color="#ab4722" stop-opacity=".55" /><stop offset="1" stop-color="#ab4722" stop-opacity=".75" /></linearGradient></defs>
        <path d="M1410 1H1920V51H1410z" fill="url(#haze)" />
        <path d="M1442 8q6-7 16-6l10 4h38q8 6 8 26-18 8-40 4-16-6-32 0l-2-1q-6-15 2-27z" fill="#a4421f" opacity=".5" />
        <path d="M1577 3q26-4 34 14 6 16 3 30-40 3-79-2-6-2-8-6l12 0q-16-12-4-24 18-4 34 0 2-8 8-12z" fill="#a3421f" opacity=".7" />
        <path d="M1635 0h152l-4 28q14-2 10 6-14 14-60 12-20-2-20-5h-60q-14-6-20 2z" fill="#a4421f" opacity=".9" />
        <path d="M1832 0h48q6 20-4 28-16 2-20 22h-28z" fill="#bc4f29" opacity=".8" />
        <path d="M1857 50q-4-22 8-24 10 0 10 8 20-6 30 8v8z" fill="#9c3d1d" opacity=".9" />
      </svg>
      <div class="titlebar">
        <Strip class="quick" :items="quick" :from="0" />
        <div class="context">그리기 도구</div>
        <Strip class="grow" :items="windowBar" :from="773" />
      </div>
      <nav class="tabs">
        <span v-for="t in tabs" :key="t.t" class="tab" :class="{ on: t.on }" :style="{ width: t.w + 'px' }">{{ t.t }}</span>
        <span class="tab format">서식</span>
        <Strip class="grow" :items="tell" :from="773" />
      </nav>
    </header>

    <section class="ribbon">
      <div class="group g1">
        <div class="body">
          <div class="big w60"><div class="pic"><Icon n="paste" /></div><span>붙여넣기</span><Icon n="car" /></div>
          <div class="rows"><Strip v-for="(r, n) in clip" :key="n" :items="r" :from="60" /></div>
        </div>
        <footer><span>클립보드</span><Icon n="launch" /></footer>
      </div>
      <div class="group g2">
        <div class="body">
          <div class="big w76"><div class="pic"><Icon n="newslide" /></div><span>새 슬라이드</span><Icon n="car" /></div>
          <div class="rows"><Strip v-for="(r, n) in slides" :key="n" :items="r" :from="219" /></div>
        </div>
        <footer><span>슬라이드</span></footer>
      </div>
      <div class="group g3">
        <div class="pairs">
          <div class="line">
            <div class="combo face"><span>맑은 고딕 (본문)</span><Icon n="car" /></div>
            <div class="combo size"><span>18</span><Icon n="car" /></div>
            <Strip class="grow" :items="font1" :from="490" />
          </div>
          <Strip class="line" :items="font2" :from="307" />
        </div>
        <footer><span>글꼴</span><Icon n="launch" /></footer>
      </div>
      <div class="group g4">
        <div class="body">
          <div class="pairs half">
            <Strip class="line" :items="para1" :from="569" />
            <Strip class="line" :items="para2" :from="569" />
          </div>
          <div class="rows"><Strip v-for="(r, n) in text3" :key="n" :items="r" :from="739" /></div>
        </div>
        <footer><span>단락</span><Icon n="launch" /></footer>
      </div>
      <div class="group g5">
        <div class="body">
          <div class="gallery">
            <div class="shapes"><svg v-for="(g, n) in gallery" :key="n" width="17" height="17" viewBox="0 0 17 17" fill="none" stroke="#5c5c5c" stroke-width="1" v-html="g" /></div>
            <div class="spin">
              <i class="off"><svg width="7" height="4"><path d="M0 4h6L3 0z" fill="#bbb" /></svg></i>
              <i><Icon n="car" /></i>
              <i><svg width="8" height="9"><path d="M0 1h7" stroke="#666" /><path d="M0.500 4h6l-3 3.600z" fill="#666" /></svg></i>
            </div>
          </div>
          <div class="big w42"><div class="pic"><Icon n="arrange" /></div><span>정렬</span><Icon n="car" /></div>
          <div class="big w52"><div class="pic"><Icon n="quick" /></div><span>빠른</span><div class="two"><span>스타일</span><Icon n="car" /></div></div>
          <div class="rows"><Strip v-for="(r, n) in shapeStyle" :key="n" :items="r" :from="1107" /></div>
        </div>
        <footer><span>그리기</span><Icon n="launch" /></footer>
      </div>
      <div class="group g6">
        <div class="body"><div class="rows"><Strip v-for="(r, n) in edit" :key="n" :items="r" :from="1209" /></div></div>
        <footer><span>편집</span></footer>
      </div>
      <div class="collapse"><svg width="10" height="7" viewBox="0 0 10 7"><path d="M1 6l4-4 4 4" fill="none" stroke="#666" stroke-width="1.800" /></svg></div>
    </section>

    <main class="work">
      <aside class="panel">
        <div class="list">
          <div v-for="s in thumbs" :key="s.n" class="thumb" :class="{ on: s.on }">
            <span class="num">{{ s.n > 4 ? s.n : '' }}</span>
            <svg class="mini" viewBox="0 0 714 405" width="238" height="135" v-html="s.d" />
          </div>
        </div>
      </aside>
      <div class="scroll left">
        <i class="btn"><svg width="9" height="5"><path d="M0 5h8.500L4.200 0z" fill="#666" /></svg></i>
        <div class="track"><div class="knob" /></div>
        <i class="btn"><svg width="9" height="5"><path d="M0 0h8.500L4.200 5z" fill="#666" /></svg></i>
      </div>
      <div class="stage">
        <div class="slide">
          <div class="frame">
            <div class="head"><span class="lined"><span class="wavy">우리프로그램</span></span></div>
            <div class="box code">코드 : 상수, 클래스 선언 그 자체 함수의 내용 그 자체 수정이 불가능한 녀석들이다.</div>
            <div class="box data">데이터</div>
            <div class="box heap"><p><span class="lined"><span class="wavy">힙</span></span> : <span class="latin">new</span> 클래스명<span class="paren">()</span> 만들어진 클래스 객체들의 본체가 <span class="lined"><span class="wavy">여기있다</span></span>.</p></div>
            <div class="box stack">
              <p>스택 : 함수의 실행 메모리 영<span class="sel">역</span> (그 박스안에 들어있는 지역변수)</p>
              <i v-for="k in handles" :key="k" class="handle" :class="k" />
              <svg class="rotate" width="26" height="44" viewBox="0 0 26 44">
                <path d="M11 22V40" stroke="#999" />
                <path d="M14.500 17.500A7.300 7.300 0 1 1 18.200 11" fill="none" stroke="#8c8c94" stroke-width="5" />
                <path d="M11.500 9.500h12.500l-6 8z" fill="#8c8c94" />
                <path d="M14 17A7 7 0 1 1 18 11.500" fill="none" stroke="#fff" stroke-width="2.400" />
                <path d="M14 11h7.500l-3.500 4.700z" fill="#fff" />
              </svg>
            </div>
          </div>
        </div>
      </div>
      <div class="scroll right">
        <i class="btn"><svg width="7" height="5"><path d="M0 4h7L3.500 0z" fill="#666" /></svg></i>
        <div class="track"><div class="knob" /></div>
        <i class="btn"><svg width="7" height="5"><path d="M0 0h7L3.500 4z" fill="#666" /></svg></i>
        <svg class="jump" width="8" height="30" viewBox="0 0 8 30"><path d="M0.500 4.500h7L4 .5zM0.500 9h7L4 5zM0.500 19h7L4 23zM0.500 23.500h7L4 27.500z" fill="#666" /></svg>
      </div>
    </main>

    <Strip class="status" :items="status" :from="0" />

    <footer class="taskbar">
      <div v-for="a in apps" :key="a.n" class="app-btn" :class="a.c"><Icon :n="a.n" /></div>
      <Strip class="tray" :items="tray" :from="1322" />
      <div class="clock"><span>오후 5:37</span><span>2019-05-07</span></div>
      <div class="action"><Icon n="action" /></div>
    </footer>
  </div>
</template>

<style>
body { margin: 0; overflow: hidden; }
.icon { display: block; flex: none; overflow: visible; }
.strip { display: grid; align-items: center; min-width: 0; box-sizing: border-box; }
.cell { display: flex; align-items: center; white-space: nowrap; min-width: 0; height: 100%; box-sizing: border-box; }
.cell.txt { padding-bottom: 2px; }
.cell.dim { color: #f0764c; }
.cell.toggle { width: 38px; height: 15px; border: 1px solid #ee744b; border-radius: 8px; color: #f0764c; font-size: 10px; padding: 0 0 0 4px; gap: 10px; }
.cell.toggle::before { content: ''; width: 7px; height: 7px; border-radius: 50%; background: #f0764c; }
.cell.pressed { background: #c6c6c6; width: 22px; height: 23px; padding-left: 4px; }
.cell.view { background: #c8c8c8; width: 38px; padding-left: 12px; }
.cell.ime { font-size: 16px; }
.cell.tight { letter-spacing: -0.65px; }
.cell.narrow { letter-spacing: -0.7px; }
.cell.name { letter-spacing: -0.35px; }
.cell.pct { letter-spacing: -0.3px; }
.cell.wide { letter-spacing: 0.18px; }
</style>

<style scoped>
.app { width: 1920px; height: 1080px; display: flex; flex-direction: column; overflow: hidden; background: #e5e5e5; color: #333; font: 13px/1 "Open Sans", "Noto Sans CJK KR", sans-serif; }
.top { position: relative; height: 64px; flex: none; background: #c15028; color: #fff; }
.art { position: absolute; right: 0; top: 0; }
.titlebar { position: relative; display: flex; height: 34px; }
.titlebar > .strip { height: 33px; }
.quick { width: 697px; }
.context { width: 76px; height: 34px; line-height: 31px; text-align: center; background: #984023; color: #f6bfa3; white-space: nowrap; padding-left: 1px; box-sizing: border-box; }
.grow { flex: 1; }
.tabs { position: relative; display: flex; height: 30px; }
.tab { display: flex; justify-content: center; align-items: center; white-space: nowrap; box-sizing: border-box; padding-bottom: 2px; }
.tab:first-child { margin-right: 3px; }
.tab.on { background: #f3f3f3; color: #c15028; }
.tab.format { width: 76px; margin-left: 3px; background: #984023; }

.ribbon { display: flex; height: 93px; flex: none; box-sizing: border-box; padding-top: 4px; background: #f3f3f3; }
.group { box-sizing: border-box; height: 86px; display: flex; flex-direction: column; border-right: 1px solid #d2d2d2; }
.g1 { width: 143px; } .g2 { width: 164px; } .g3 { width: 262px; } .g4 { width: 298px; } .g5 { width: 342px; } .g6 { width: 87px; }
.body { display: flex; height: 69px; margin-top: -1px; flex: none; }
.group footer { display: flex; align-items: center; flex: none; height: 24px; padding-right: 3px; }
.group footer span { flex: 1; text-align: center; }
.g6 footer { padding-left: 2px; }
.rows { flex: 1; display: flex; flex-direction: column; }
.rows .strip { height: 23px; }
.big { display: flex; flex-direction: column; align-items: center; white-space: nowrap; }
.big .pic { height: 38px; display: flex; align-items: center; }
.big span { height: 16px; line-height: 15px; }
.big > .icon { margin-top: 5px; }
.w60 { width: 60px; } .w76 { width: 76px; } .w42 { width: 48px; } .w52 { width: 50px; }
.w52 .pic, .w60 .pic { padding-left: 3px; }
.w52 .pic { margin-left: -5px; }
.two { display: flex; align-items: center; gap: 3px; margin: -1px 0 0 4px; }
.pairs { height: 69px; margin-top: -1px; padding-top: 5px; box-sizing: border-box; flex: none; }
.half { width: 170px; margin-top: 0; padding-top: 4px; }
.line { height: 30px; }
div.line:first-child { display: flex; align-items: center; }
.strip.line:first-child { display: grid; }
.combo { box-sizing: border-box; height: 24px; background: #fff; border: 1px solid #ababab; display: flex; align-items: center; justify-content: space-between; padding: 0 4px 0 3px; white-space: nowrap; color: #444; }
.face { width: 129px; margin-left: 4px; }
.size { width: 50px; border-left: 0; }
.gallery { display: flex; box-sizing: border-box; width: 137px; height: 62px; margin: 3px 0 0 5px; border: 1px solid #b0b0b0; background: #fff; }
.shapes { width: 121px; display: grid; grid-template-columns: repeat(6, 20px); grid-template-rows: repeat(3, 20px); justify-items: center; align-items: center; }
.spin { flex: 1; display: flex; flex-direction: column; border-left: 1px solid #b0b0b0; }
.spin i { flex: 1; display: flex; justify-content: center; align-items: center; }
.spin i + i { border-top: 1px solid #b0b0b0; }
.spin .off { background: #e6e6e6; }
.collapse { flex: 1; display: flex; justify-content: flex-end; align-items: flex-end; padding: 0 9px 4px 0; }

.work { height: 861px; flex: none; box-sizing: border-box; display: flex; border-top: 1px solid #cdcdcd; border-bottom: 1px solid #c4c4c4; background: #e5e5e5; }
.panel { width: 290px; overflow: hidden; }
.list { display: flex; flex-direction: column; gap: 18px; margin-top: -70px; }
.thumb { display: flex; height: 135px; flex: none; }
.num { width: 34px; padding: 0 0 0 12px; box-sizing: border-box; font-size: 15px; line-height: 11px; color: #444; }
.mini { box-sizing: border-box; background: #fff; outline: 1px solid #c6c6c6; outline-offset: -1px; overflow: hidden; }
.thumb.on .num { color: #c3532c; }
.thumb.on .mini { outline: 3px solid #e8825f; outline-offset: -1px; }
.scroll { width: 15px; display: flex; flex-direction: column; padding: 2px 0 1px; box-sizing: border-box; }
.btn { box-sizing: border-box; height: 15px; border: 1px solid #ababab; background: #fff; display: flex; align-items: center; justify-content: center; }
.track { flex: 1; background: #dadada; }
.knob { box-sizing: border-box; background: #fff; border: 1px solid #ababab; }
.left .knob { height: 505px; margin-top: 321px; }
.right { padding-bottom: 60px; height: 859px; }
.right .knob { height: 85px; margin-top: 684px; }
.jump { flex: none; margin: 6px 0 -36px 4px; }
.stage { flex: 1; margin-left: 4px; border-left: 1px solid #bdbdbd; border-bottom: 1px solid #c0c0c0; height: 857px; box-sizing: border-box; padding: 17px 0 0 70px; }
.slide { box-sizing: border-box; width: 1455px; height: 820px; background: #fff; border: 1px solid #c8c8c8; padding: 12px 0 0 29px; }
.frame { box-sizing: border-box; width: 1406px; height: 778px; border: 2px solid #b3632a; background: #f9842d; display: flex; flex-direction: column; color: #fff; font-size: 28.5px; word-spacing: 1.5px; letter-spacing: 0.82px; white-space: nowrap; }
.head { box-sizing: border-box; height: 35px; border-bottom: 2px solid #c2601a; text-align: center; line-height: 33px; }
.box { box-sizing: border-box; margin: 0 22px; border: 2px solid #42547f; display: flex; justify-content: center; align-items: center; }
.box p { margin: 0; line-height: 34px; }
.code { height: 144px; margin-top: 15px; background: #4072c8; align-items: flex-start; padding-top: 7px; }
.data { height: 94px; margin-top: 22px; background: #6ba244; border-color: #5c7530; }
.heap { height: 211px; margin-top: 12px; background: #743ba3; border-color: #5c5a90; }
.latin { letter-spacing: -0.7px; }
.paren { letter-spacing: -1.6px; }
.stack { position: relative; height: 221px; margin-top: 11px; background: #8ca9de; border: 1px dotted #555f73; box-shadow: inset 0 0 0 1px #607fb4; }
.lined { text-decoration: underline dotted #fff 1.5px; text-underline-offset: 3px; text-decoration-skip-ink: none; }
.wavy { text-decoration: underline wavy #e8403a 1px; text-underline-offset: 3px; text-decoration-skip-ink: none; }
.sel { background: #7f8ea8; color: #a8b0bc; box-shadow: 0 0 0 2px #b3c6ea; }
.handle { position: absolute; box-sizing: border-box; width: 10px; height: 10px; border: 2px solid #999ca3; border-radius: 50%; background: #fff; }
.tl, .tc, .tr { top: -5px; } .bl, .bc, .br { bottom: -5px; } .ml, .mr { top: 105px; }
.tl, .ml, .bl { left: -5px; } .tr, .mr, .br { right: -5px; } .tc, .bc { left: 673px; }
.rotate { position: absolute; left: 667px; top: -46px; }

.status { height: 22px; flex: none; background: #f2f2f2; color: #444; }
.taskbar { height: 40px; flex: none; display: flex; background: #050b12; color: #fff; }
.app-btn { position: relative; width: 48.98px; display: flex; align-items: center; justify-content: center; }
.run::after, .active::after, .alert::after { content: ''; position: absolute; left: 5px; right: 4px; bottom: 0; height: 2px; background: #76b9ed; }
.active { background: #3b4248; }
.alert { background: #a55a1e; }
.active::after, .alert::after { left: 0; right: 0; }
.alert::after { background: #ff7d0c; }
.tray { width: 466px; }
.clock { width: 78px; display: flex; flex-direction: column; align-items: center; gap: 6px; padding-top: 3px; white-space: nowrap; }
.action { flex: 1; display: flex; align-items: center; padding-left: 13px; border-right: 1px solid #5a5f64; margin-right: 4px; }
</style>
